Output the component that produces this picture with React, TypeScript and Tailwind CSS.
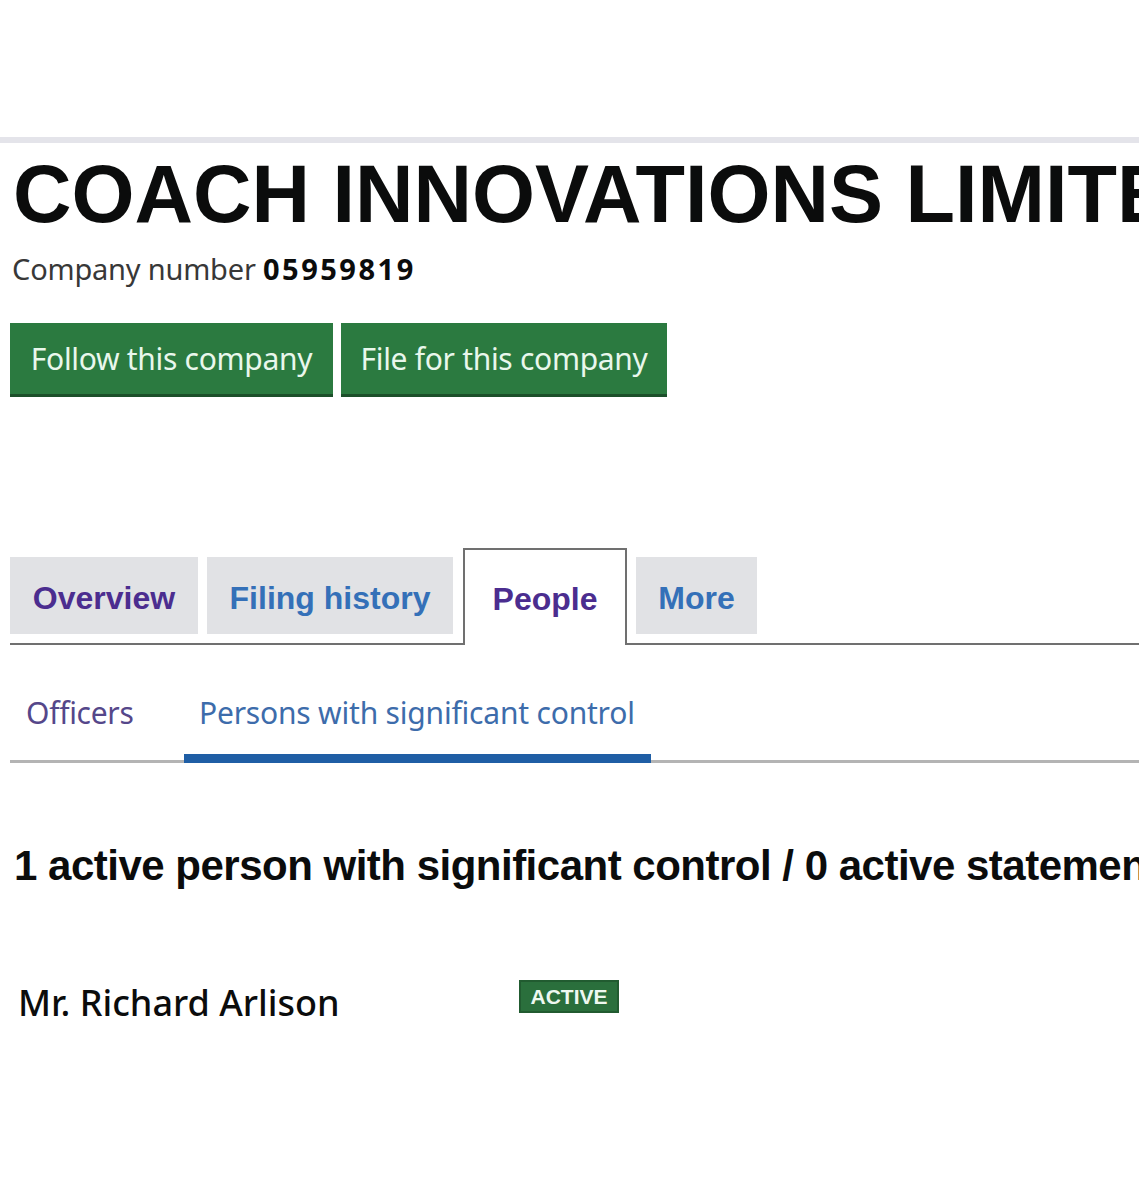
import React from 'react';

const arial = "font-['Liberation_Sans',Arial,sans-serif]";
const transport = "font-['Noto_Sans','Open_Sans',sans-serif]";

function Tab({
  label,
  color,
  className = '',
}: {
  label: string;
  color: string;
  className?: string;
}) {
  return (
    <div
      className={`flex h-[77px] items-center bg-[#e1e2e5] px-[21px] pt-[4px] text-[32px] font-bold ${arial} ${color} ${className}`}
    >
      {label}
    </div>
  );
}

export default function App() {
  return (
    <div className="min-h-[1200px] w-[1139px] overflow-hidden bg-white text-[#0b0c0c]">
      <div className="h-[137px]" />
      <div className="h-[6px] bg-[#e4e4ea]" />

      <h1
        className={`mt-[11px] whitespace-nowrap pl-[13px] text-[81px] font-bold leading-[80px] ${arial}`}
      >
        COACH INNOVATIONS LIMITED
      </h1>

      <div className={`mt-[19px] pl-[12px] text-[29px] leading-[32px] ${transport}`}>
        <span className="tracking-[-0.2px] text-[#383838]">Company number </span>
        <span className="font-bold tracking-[2.5px] text-[#0b0c0c]">05959819</span>
      </div>

      <div className={`mt-[38px] flex gap-[8px] pl-[10px] ${transport}`}>
        <button className="h-[74px] w-[323px] border-b-[3px] border-[#1c4f2a] bg-[#2b7a40] text-[30px] tracking-[-0.3px] text-[#e9f7ec]">
          Follow this company
        </button>
        <button className="h-[74px] w-[326px] border-b-[3px] border-[#1c4f2a] bg-[#2b7a40] text-[30px] tracking-[-0.3px] text-[#e9f7ec]">
          File for this company
        </button>
      </div>

      {/* main tabs */}
      <div className="mt-[151px] flex items-end pl-[10px]">
        <div className="flex gap-[9px] border-b-2 border-[#707070] pb-[9px] pr-[10px]">
          <Tab label="Overview" color="text-[#4b2d8f]" className="w-[188px] justify-center" />
          <Tab label="Filing history" color="text-[#3470b8]" className="w-[246px] justify-center" />
        </div>
        <div
          className={`flex h-[97px] w-[164px] items-center justify-center border-2 border-b-0 border-[#707070] bg-white pt-[2px] text-[32px] font-bold text-[#4b2d8f] ${arial}`}
        >
          People
        </div>
        <div className="flex flex-1 border-b-2 border-[#707070] pb-[9px] pl-[9px]">
          <Tab label="More" color="text-[#3470b8]" className="w-[121px] justify-center" />
        </div>
      </div>

      {/* sub tabs */}
      <div
        className={`ml-[10px] mt-[47px] flex border-b-[3px] border-[#b4b4b4] text-[30px] leading-[42px] ${transport}`}
      >
        <div className="w-[174px] pb-[26px] pl-[16px] tracking-[-0.3px] text-[#55478a]">Officers</div>
        <div className="-mb-[3px] w-[467px] border-b-[9px] border-[#1f5ea5] pb-[18px] pl-[15px] tracking-[-0.2px] text-[#3d6cab]">
          Persons with significant control
        </div>
      </div>

      <h2
        className={`mt-[79px] whitespace-nowrap pl-[14px] text-[42px] font-bold leading-[48px] tracking-[-0.5px] ${arial}`}
      >
        1 active person with significant control / 0 active statements
      </h2>

      <div className="mt-[83px] flex items-center pl-[18px]">
        <div className={`w-[501px] pt-[3px] text-[36px] font-medium text-[#0b0c0c] ${transport}`}>
          Mr. Richard Arlison
        </div>
        <span
          className={`mb-[10px] flex h-[33px] w-[100px] items-center justify-center border-2 border-[#215b30] bg-[#2a6f3c] text-[21px] font-bold text-[#eef8f0] ${arial}`}
        >
          ACTIVE
        </span>
      </div>
    </div>
  );
}
